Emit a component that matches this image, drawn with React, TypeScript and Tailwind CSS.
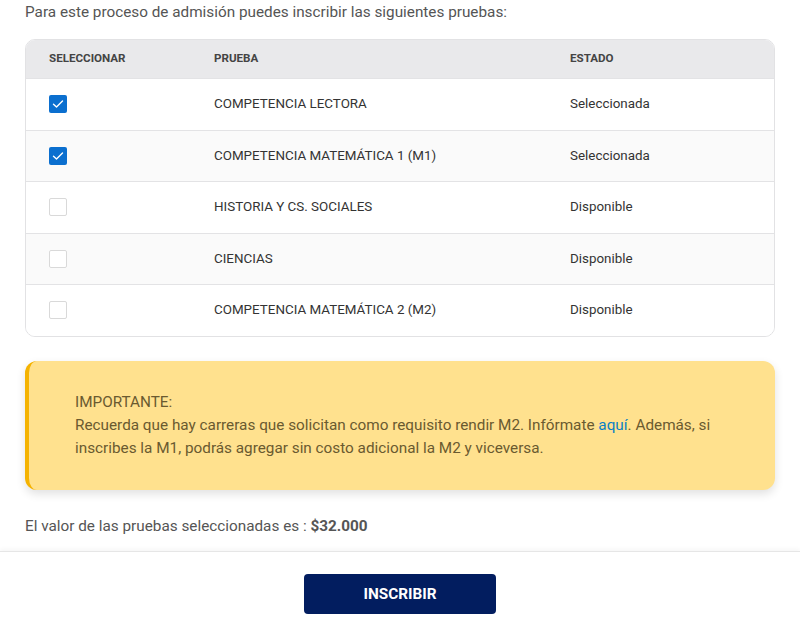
import React from 'react';

type Row = {name: string; status: string; checked: boolean};

const rows: Row[] = [
    {name: 'COMPETENCIA LECTORA', status: 'Seleccionada', checked: true},
    {name: 'COMPETENCIA MATEMÁTICA 1 (M1)', status: 'Seleccionada', checked: true},
    {name: 'HISTORIA Y CS. SOCIALES', status: 'Disponible', checked: false},
    {name: 'CIENCIAS', status: 'Disponible', checked: false},
    {name: 'COMPETENCIA MATEMÁTICA 2 (M2)', status: 'Disponible', checked: false},
];

const Checkbox = ({checked}: {checked: boolean}) => (
    checked ? (
        <div className="w-[18px] h-[18px] rounded-[2px] bg-[#0b6fcf] flex items-center justify-center">
            <svg width="12" height="10" viewBox="0 0 12 10" fill="none">
                <path d="M1.5 5.2 L4.5 8 L10.5 2" stroke="white" strokeWidth="1.4" strokeLinecap="round" strokeLinejoin="round"/>
            </svg>
        </div>
    ) : (
        <div className="w-[18px] h-[18px] rounded-[2px] border border-[#d9d9d9] bg-white"/>
    )
);

const App = () => {
    return (
        <div className="w-[800px] h-[624px] bg-white overflow-hidden flex flex-col font-['Roboto',sans-serif]">
            <div className="px-[25px] flex-1">
                <p className="text-[15.3px] text-[#555] leading-[24px]">
                    Para este proceso de admisión puedes inscribir las siguientes pruebas:
                </p>

                <div className="mt-[15px] rounded-[10px] border border-[#e2e2e4] overflow-hidden">
                    <div className="grid grid-cols-[165px_356px_1fr] h-[38px] items-center bg-[#e9e9eb] text-[11.6px] font-bold text-[#444] pl-[23px]">
                        <div>SELECCIONAR</div>
                        <div>PRUEBA</div>
                        <div>ESTADO</div>
                    </div>
                    {rows.map((r, i) => (
                        <div key={r.name}
                             className={`grid grid-cols-[165px_356px_1fr] h-[51.5px] items-center pl-[23px] text-[13.4px] text-[#333] border-t border-[#e3e3e5] ${i % 2 === 1 ? 'bg-[#fafafa]' : 'bg-white'}`}>
                            <div><Checkbox checked={r.checked}/></div>
                            <div>{r.name}</div>
                            <div>{r.status}</div>
                        </div>
                    ))}
                </div>

                <div className="mt-[24px] h-[129px] rounded-[12px] bg-[#ffe18e] border-l-[4px] border-[#f5b301] shadow-[0_4px_10px_rgba(0,0,0,0.12)] pl-[46px] pr-[40px] flex flex-col justify-center text-[15.3px] leading-[23px] text-[#6a5a30]">
                    <p>IMPORTANTE:</p>
                    <p>
                        Recuerda que hay carreras que solicitan como requisito rendir M2. Infórmate{' '}
                        <a className="text-[#0a7fc4]">aquí</a>. Además, si inscribes la M1, podrás agregar sin costo adicional la M2 y viceversa.
                    </p>
                </div>

                <p className="mt-[24px] text-[15.3px] text-[#555] leading-[24px]">
                    El valor de las pruebas seleccionadas es : <span className="font-bold">$32.000</span>
                </p>
            </div>

            <div className="h-[73px] shrink-0 border-t border-[#e6e6e6] shadow-[0_-2px_4px_rgba(0,0,0,0.04)] flex justify-center pt-[22px]">
                <button className="w-[192px] h-[40px] rounded-[4px] bg-[#021d5f] text-white text-[15.3px] font-bold">
                    INSCRIBIR
                </button>
            </div>
        </div>
    );
};

export default App;
